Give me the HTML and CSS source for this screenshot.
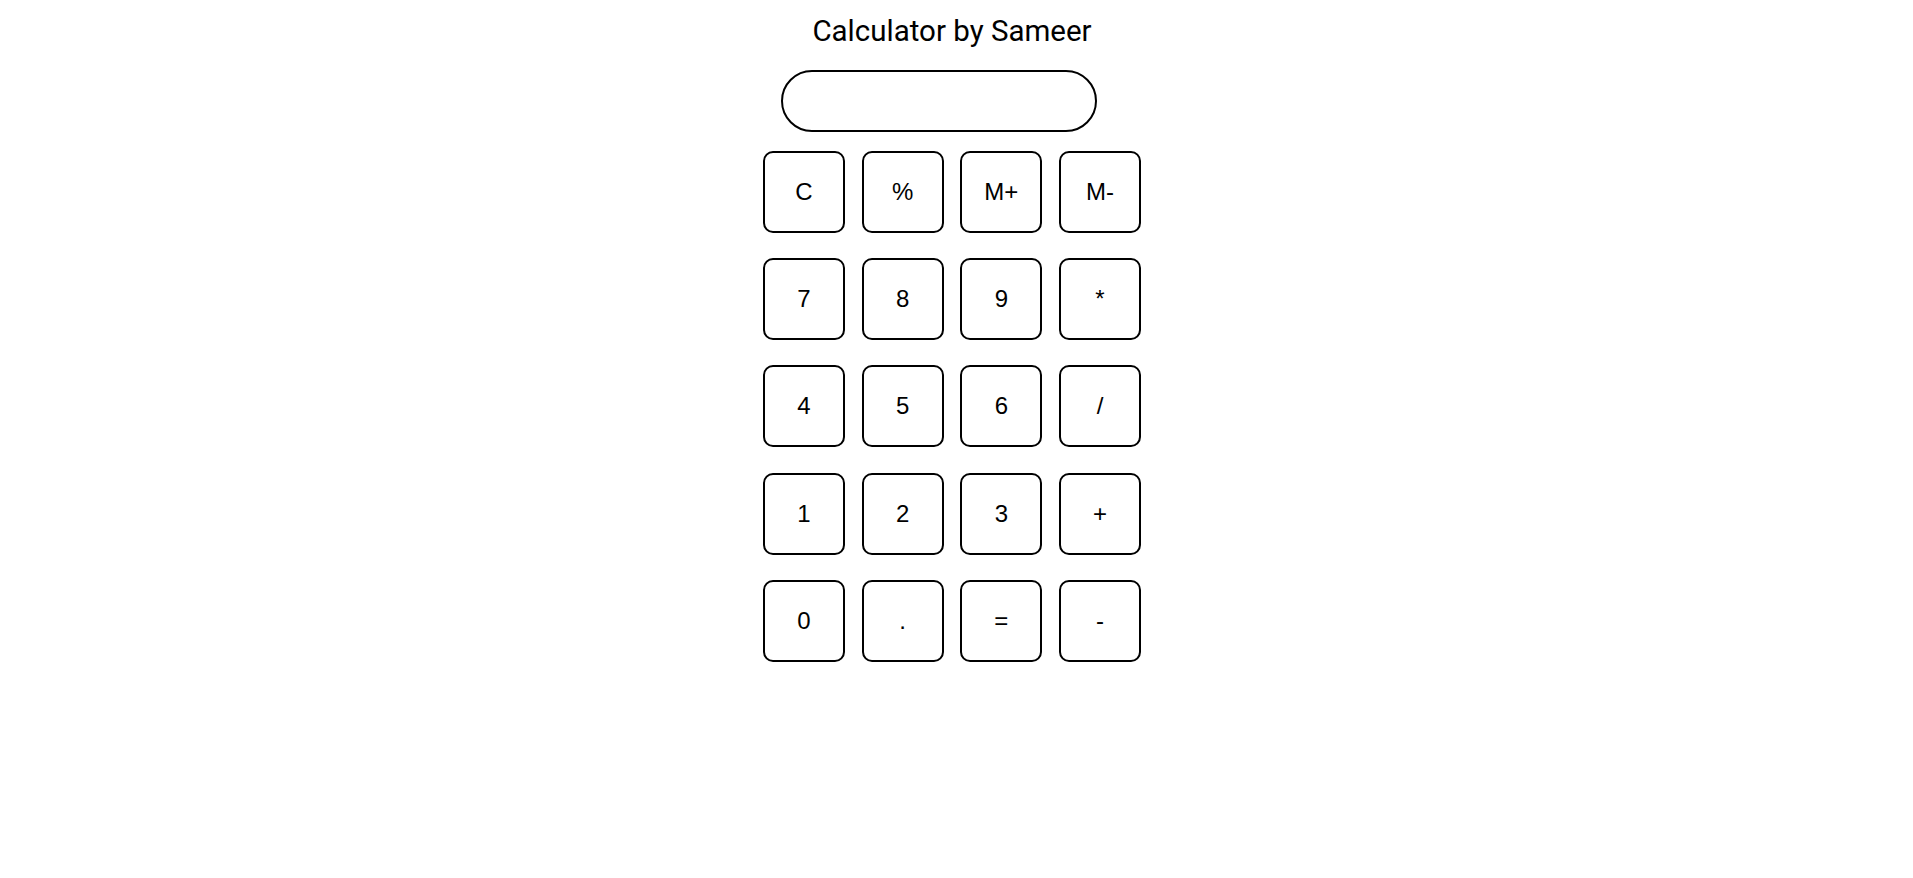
FILE: index.html
```html
<!DOCTYPE html>
<html lang="en">
<head>
<meta charset="utf-8">
<title>Calculator by Sameer</title>
<link rel="stylesheet" href="styles.css">
</head>
<body>
<main class="calc">
  <h1 class="title">Calculator by Sameer</h1>
  <div class="display-row">
    <input class="display" type="text" readonly>
  </div>
  <div class="keys">
    <button class="key">C</button>
    <button class="key">%</button>
    <button class="key">M+</button>
    <button class="key">M-</button>
    <button class="key">7</button>
    <button class="key">8</button>
    <button class="key">9</button>
    <button class="key">*</button>
    <button class="key">4</button>
    <button class="key">5</button>
    <button class="key">6</button>
    <button class="key">/</button>
    <button class="key">1</button>
    <button class="key">2</button>
    <button class="key">3</button>
    <button class="key">+</button>
    <button class="key">0</button>
    <button class="key">.</button>
    <button class="key">=</button>
    <button class="key">-</button>
  </div>
</main>
</body>
</html>
```
FILE: styles.css
```css
html {
  background: #ffffff;
}

body {
  margin: 8px;
  min-height: 100vh;
  background: #ffffff;
  color: #000000;
  font-family: Roboto, "Liberation Sans", Arial, sans-serif;
}

.calc {
  display: flex;
  flex-direction: column;
  align-items: center;
  padding-right: 9px;
}

.title {
  margin: 5px 0 0;
  font-family: Roboto, "Liberation Sans", sans-serif;
  font-size: 29.5px;
  font-weight: 400;
  line-height: 37.5px;
  color: #000000;
}

.display-row {
  margin-top: 19px;
  display: flex;
  padding-right: 27px;
}

.display {
  box-sizing: border-box;
  width: 316px;
  height: 62px;
  border: 2px solid #000000;
  border-radius: 31px;
  background: #ffffff;
  padding: 0 20px;
  font-family: "Liberation Sans", Arial, sans-serif;
  font-size: 24px;
  outline: none;
}

.keys {
  margin-top: 19px;
  display: grid;
  grid-template-columns: repeat(4, 82px);
  grid-auto-rows: 82px;
  column-gap: 16.7px;
  row-gap: 25.4px;
}

.key {
  box-sizing: border-box;
  width: 82px;
  height: 82px;
  margin: 0;
  padding: 0;
  border: 2px solid #000000;
  border-radius: 10px;
  background: #ffffff;
  color: #000000;
  font-family: "Liberation Sans", Arial, sans-serif;
  font-size: 24px;
  display: flex;
  align-items: center;
  justify-content: center;
}
```
